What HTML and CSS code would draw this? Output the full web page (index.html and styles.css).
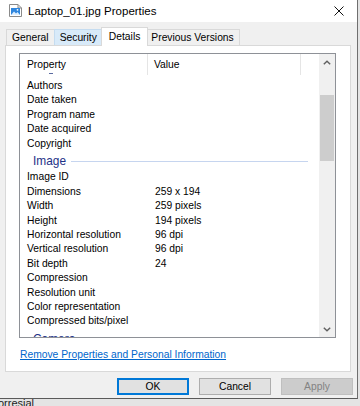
FILE: index.html
```html
<!DOCTYPE html>
<html>
<head>
<meta charset="utf-8">
<link rel="stylesheet" href="styles.css">
</head>
<body>
<div class="window">
  <div class="titlebar">
    <svg class="appicon" width="13" height="13" viewBox="0 0 13 13">
      <path d="M0.5 0.5 H9 L12.5 4 V12.5 H0.5 Z" fill="#fff" stroke="#8a8a8a"/>
      <path d="M9 0.5 V4 H12.5" fill="none" stroke="#8a8a8a"/>
      <rect x="2" y="4" width="9" height="7" fill="#2f86de"/>
      <path d="M2 11 L5 7.5 L7 9.5 L8.5 8 L11 11 Z" fill="#dfefff"/>
      <circle cx="8.5" cy="5.8" r="0.9" fill="#fff"/>
    </svg>
    <span class="title">Laptop_01.jpg Properties</span>
    <svg class="close" width="10" height="10" viewBox="0 0 10 10">
      <path d="M0.5 0.5 L9.5 9.5 M9.5 0.5 L0.5 9.5" stroke="#111" stroke-width="1" fill="none"/>
    </svg>
  </div>
  <div class="tabs">
    <div class="tab">General</div>
    <div class="tab hover">Security</div>
    <div class="tab active">Details</div>
    <div class="tab">Previous Versions</div>
  </div>
  <div class="panel">
    <div class="listbox">
      <div class="list">
        <div class="header">
          <div class="hcol hname">Property</div>
          <div class="hcol hvalue">Value</div>
        </div>
        <div class="partial"><span class="dash"></span></div>
        <div class="row"><span class="name">Authors</span><span class="value"></span></div>
        <div class="row"><span class="name">Date taken</span><span class="value"></span></div>
        <div class="row"><span class="name">Program name</span><span class="value"></span></div>
        <div class="row"><span class="name">Date acquired</span><span class="value"></span></div>
        <div class="row"><span class="name">Copyright</span><span class="value"></span></div>
        <div class="group"><span class="gtext">Image</span><span class="gline"></span></div>
        <div class="row"><span class="name">Image ID</span><span class="value"></span></div>
        <div class="row"><span class="name">Dimensions</span><span class="value">259 x 194</span></div>
        <div class="row"><span class="name">Width</span><span class="value">259 pixels</span></div>
        <div class="row"><span class="name">Height</span><span class="value">194 pixels</span></div>
        <div class="row"><span class="name">Horizontal resolution</span><span class="value">96 dpi</span></div>
        <div class="row"><span class="name">Vertical resolution</span><span class="value">96 dpi</span></div>
        <div class="row"><span class="name">Bit depth</span><span class="value">24</span></div>
        <div class="row"><span class="name">Compression</span><span class="value"></span></div>
        <div class="row"><span class="name">Resolution unit</span><span class="value"></span></div>
        <div class="row"><span class="name">Color representation</span><span class="value"></span></div>
        <div class="row"><span class="name">Compressed bits/pixel</span><span class="value"></span></div>
        <div class="group"><span class="gtext">Camera</span><span class="gline"></span></div>
      </div>
      <div class="scrollbar">
        <div class="sbtn">
          <svg width="8" height="5" viewBox="0 0 8 5"><path d="M0.8 4.3 L4 1.2 L7.2 4.3" fill="none" stroke="#606060" stroke-width="1.4"/></svg>
        </div>
        <div class="track"><div class="thumb"></div></div>
        <div class="sbtn">
          <svg width="8" height="5" viewBox="0 0 8 5"><path d="M0.8 0.7 L4 3.8 L7.2 0.7" fill="none" stroke="#606060" stroke-width="1.4"/></svg>
        </div>
      </div>
    </div>
    <a class="link" href="#">Remove Properties and Personal Information</a>
  </div>
  <div class="buttons">
    <div class="btn default">OK</div>
    <div class="btn">Cancel</div>
    <div class="btn disabled">Apply</div>
  </div>
</div>
<div class="behind">orresial</div>
</body>
</html>
```
FILE: styles.css
```css
* { box-sizing: border-box; }
html, body { margin: 0; padding: 0; }
body {
  width: 360px;
  height: 406px;
  overflow: hidden;
  background: #e4e4e4;
  font-family: "Liberation Sans", Arial, sans-serif;
  font-size: 10.3px;
  color: #000;
}
.window {
  width: 358px;
  height: 399px;
  background: #f0f0f0;
  border-right: 1px solid #6f6f6f;
  border-bottom: 1px solid #5a5a5a;
  display: flex;
  flex-direction: column;
}
.titlebar {
  height: 22px;
  background: #fff;
  display: flex;
  align-items: center;
  padding-left: 9px;
  flex-shrink: 0;
}
.appicon { display: block; margin-top: -1px; }
.title {
  font-size: 11.5px;
  margin-left: 6px;
  flex: 1;
}
.close { display: block; margin-right: 13px; margin-top: 0; }
.tabs {
  height: 23px;
  display: flex;
  align-items: flex-end;
  padding-left: 6px;
  flex-shrink: 0;
  position: relative;
  z-index: 1;
}
.tab {
  height: 16px;
  line-height: 15px;
  padding: 0 5px;
  border: 1px solid #d9d9d9;
  border-bottom: none;
  margin-left: -1px;
  background: #f0f0f0;
  white-space: nowrap;
}
.tab:first-child { margin-left: 0; }
.tab.hover {
  background: #d8eaf9;
  border-color: #c5dcf0;
}
.tab.active {
  height: 19px;
  line-height: 18px;
  background: #fff;
  margin: 0 -2px -1px -2px;
  padding: 0 7px;
  position: relative;
  z-index: 2;
}
.panel {
  margin-left: 5px;
  width: 346px;
  height: 327px;
  background: #fff;
  border: 1px solid #d9d9d9;
  padding: 7px 0 0 13px;
  flex-shrink: 0;
}
.listbox {
  width: 317px;
  height: 285px;
  border: 1px solid #8e9197;
  display: flex;
  overflow: hidden;
}
.list {
  width: 299px;
  height: 283px;
  overflow: hidden;
  flex-shrink: 0;
}
.header {
  height: 21px;
  display: flex;
}
.hcol {
  height: 21px;
  line-height: 21px;
  border-right: 1px solid #e5e5e5;
}
.hname { width: 128px; padding-left: 7px; }
.hvalue { width: 153px; padding-left: 6px; }
.partial { height: 4px; position: relative; }
.dash {
  position: absolute;
  left: 29px;
  top: -2px;
  width: 4px;
  height: 1px;
  background: #5a6aa0;
}
.row {
  height: 14.4px;
  line-height: 14.4px;
  display: flex;
  white-space: nowrap;
}
.name { width: 128px; padding-left: 7px; flex-shrink: 0; }
.value { padding-left: 7px; }
.group {
  height: 19.5px;
  display: flex;
  align-items: center;
  padding-left: 13px;
  padding-right: 11px;
  padding-top: 1px;
}
.gtext {
  font-size: 11.9px;
  color: #1e3287;
}
.gline {
  flex: 1;
  height: 1px;
  background: #c6d5ef;
  margin-left: 5px;
  margin-top: 1px;
}
.scrollbar {
  width: 16px;
  height: 283px;
  background: #f0f0f0;
  display: flex;
  flex-direction: column;
  flex-shrink: 0;
}
.sbtn {
  height: 16px;
  display: flex;
  align-items: center;
  justify-content: center;
  flex-shrink: 0;
}
.sbtn svg { display: block; }
.track { flex: 1; padding-top: 25px; }
.thumb {
  height: 66px;
  background: #cdcdcd;
  margin: 0 1px;
}
.link {
  display: block;
  margin-top: 10px;
  margin-left: 1px;
  line-height: 14px;
  color: #0066cc;
  text-decoration: underline;
  white-space: nowrap;
}
.buttons {
  display: flex;
  justify-content: flex-end;
  gap: 10px;
  padding-right: 4px;
  margin-top: 6px;
}
.btn {
  width: 72px;
  height: 17px;
  line-height: 15px;
  text-align: center;
  background: #e1e1e1;
  border: 1px solid #adadad;
}
.btn.default {
  border: 2px solid #0078d7;
  line-height: 13px;
}
.btn.disabled {
  background: #cccccc;
  border-color: #bfbfbf;
  color: #838383;
}
.behind {
  height: 7px;
  overflow: hidden;
  font-size: 11px;
  line-height: 7px;
  padding-top: 1px;
  margin-left: -2px;
  color: #222;
}
```
